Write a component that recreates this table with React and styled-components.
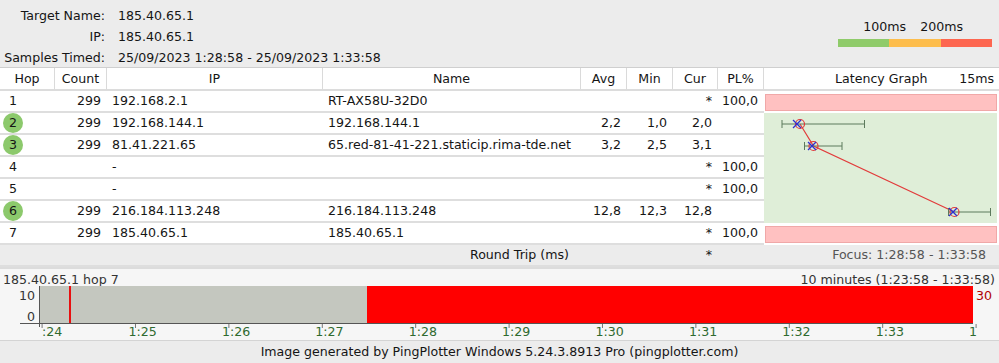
import React from 'react'
import styled, { createGlobalStyle } from 'styled-components'

const GlobalStyle = createGlobalStyle`
  body {
    margin: 0;
    background: #ffffff;
    font-family: "DejaVu Sans", Verdana, sans-serif;
    font-size: 12.6px;
    color: #151515;
  }
`

const Page = styled.div`
  width: 999px;
  height: 363px;
  overflow: hidden;
  display: flex;
  flex-direction: column;
`

const Header = styled.div`
  height: 67px;
  background: #ececec;
  display: flex;
  justify-content: space-between;
  box-sizing: border-box;
  padding: 8px 7px 0 4px;
`

const InfoGrid = styled.div`
  display: grid;
  grid-template-columns: 101px auto;
  column-gap: 13px;
  row-gap: 6px;
  align-content: start;
  white-space: nowrap;
`

const InfoLabel = styled.div`
  text-align: right;
  line-height: 15px;
`

const InfoValue = styled.div`
  line-height: 15px;
`

const Legend = styled.div`
  display: flex;
  flex-direction: column;
  align-items: flex-end;
  padding-top: 12px;
`

const LegendText = styled.div`
  display: flex;
  gap: 14px;
  padding-right: 29px;
  line-height: 14px;
`

const LegendBar = styled.div`
  display: flex;
  margin-top: 5px;
`

const LegendSeg = styled.div`
  width: 51.5px;
  height: 8px;
  background: ${p => p.$color};
`

const Table = styled.div`
  display: grid;
  grid-template-columns: 55px 52px 216px 258px 46px 46px 45px 46px 235px;
  grid-template-rows: 23px repeat(7, 22px) 22px;
  border-top: 1px solid #cfcfcf;
`

const HeadCell = styled.div`
  line-height: 22px;
  text-align: center;
  border-right: ${p => (p.$last ? 'none' : '1px solid #dadada')};
  border-bottom: 2px solid #dcdcdc;
  box-sizing: border-box;
  display: flex;
  justify-content: ${p => (p.$split ? 'space-between' : 'center')};
  padding: ${p => (p.$split ? '0 5px 0 71px' : '0')};
`

const Cell = styled.div`
  line-height: 20px;
  border-bottom: 2px solid #dedede;
  white-space: nowrap;
  overflow: hidden;
  text-align: ${p => (p.$right ? 'right' : 'left')};
  padding: ${p => (p.$right ? '0 6px 0 0' : '0 0 0 5px')};
  background: ${p => (p.$gray ? '#ececec' : '#ffffff')};
  color: ${p => (p.$muted ? '#555' : 'inherit')};
`

const HopCell = styled(Cell)`
  position: relative;
  padding-left: 9px;
`

const HopBadge = styled.span`
  position: absolute;
  left: 3px;
  top: 0px;
  width: 20px;
  height: 20px;
  border-radius: 50%;
  background: #8cc96c;
`

const HopNum = styled.span`
  position: relative;
`

const GraphWrap = styled.div`
  grid-column: 9;
  grid-row: 2 / span 7;
  background: #ffffff;
`

const RoundTripCell = styled(Cell)`
  padding-right: 12px;
`

const FocusCell = styled(Cell)`
  padding-right: 13px;
`

const ChartSection = styled.div`
  border-top: 2px solid #dcdcdc;
  background: #f6f6f6;
  height: 71px;
  display: flex;
  flex-direction: column;
`

const ChartHead = styled.div`
  display: flex;
  justify-content: space-between;
  padding: 0 4px 0 3px;
  line-height: 22px;
  height: 17px;
  color: #333;
`

const Footer = styled.div`
  flex: 1;
  background: #ececec;
  border-top: 1px solid #d4d4d4;
  text-align: center;
  line-height: 22px;
`

const hops = [
  { hop: 1, count: 299, ip: '192.168.2.1', name: 'RT-AX58U-32D0', avg: '', min: '', cur: '*', pl: '100,0' },
  { hop: 2, count: 299, ip: '192.168.144.1', name: '192.168.144.1', avg: '2,2', min: '1,0', cur: '2,0', pl: '', ok: true },
  { hop: 3, count: 299, ip: '81.41.221.65', name: '65.red-81-41-221.staticip.rima-tde.net', avg: '3,2', min: '2,5', cur: '3,1', pl: '', ok: true },
  { hop: 4, count: '', ip: '-', name: '', avg: '', min: '', cur: '*', pl: '100,0' },
  { hop: 5, count: '', ip: '-', name: '', avg: '', min: '', cur: '*', pl: '100,0' },
  { hop: 6, count: 299, ip: '216.184.113.248', name: '216.184.113.248', avg: '12,8', min: '12,3', cur: '12,8', pl: '', ok: true },
  { hop: 7, count: 299, ip: '185.40.65.1', name: '185.40.65.1', avg: '', min: '', cur: '*', pl: '100,0' },
]

// latency points in graph coords: x = ms * 15, rows 22px tall
const points = [
  { row: 1, avg: 2.2, cur: 2.4, lo: 1.2, hi: 6.7 },
  { row: 2, avg: 3.2, cur: 3.3, lo: 2.7, hi: 5.2 },
  { row: 5, avg: 12.6, cur: 12.7, lo: 12.3, hi: 15.1 },
]

const LatencyGraph = () => {
  const sx = ms => ms * 15
  const cy = row => row * 22 + 11
  return (
    <svg width="235" height="154" viewBox="0 0 235 154">
      <rect x="0" y="22" width="233" height="110" fill="#dfeed8" />
      <rect x="1.5" y="3.5" width="231" height="16" fill="#ffc1c1" stroke="#f0a8a8" />
      <rect x="1.5" y="135.5" width="231" height="16" fill="#ffc1c1" stroke="#f0a8a8" />
      <polyline
        points={points.map(p => `${sx(p.cur)},${cy(p.row)}`).join(' ')}
        fill="none"
        stroke="#e23b3b"
        strokeWidth="1.2"
      />
      {points.map(p => {
        const y = cy(p.row)
        return (
          <g key={p.row}>
            <line x1={sx(p.lo)} y1={y} x2={sx(p.hi)} y2={y} stroke="#5d7a5d" strokeWidth="1" />
            <line x1={sx(p.lo)} y1={y - 4} x2={sx(p.lo)} y2={y + 4} stroke="#5d7a5d" />
            <line x1={sx(p.hi)} y1={y - 4} x2={sx(p.hi)} y2={y + 4} stroke="#5d7a5d" />
            <circle cx={sx(p.cur)} cy={y} r="4.5" fill="none" stroke="#e23b3b" strokeWidth="1.2" />
            <line x1={sx(p.avg) - 4} y1={y - 4} x2={sx(p.avg) + 4} y2={y + 4} stroke="#3030d0" strokeWidth="1.2" />
            <line x1={sx(p.avg) - 4} y1={y + 4} x2={sx(p.avg) + 4} y2={y - 4} stroke="#3030d0" strokeWidth="1.2" />
          </g>
        )
      })}
    </svg>
  )
}

const timeLabels = ['1:24', '1:25', '1:26', '1:27', '1:28', '1:29', '1:30', '1:31', '1:32', '1:33', '1']

const TimeChart = () => {
  const x0 = 39
  const perMin = 93.4
  return (
    <svg width="999" height="54" viewBox="0 0 999 54" style={{ display: 'block' }}>
      <rect x="39" y="0" width="328" height="37" fill="#c4c7bf" />
      <rect x="367" y="0" width="606" height="37" fill="#ff0000" />
      <rect x="69" y="0" width="2" height="37" fill="#e81010" />
      <line x1="39.5" y1="0" x2="39.5" y2="41" stroke="#555" />
      <line x1="20" y1="37.5" x2="973" y2="37.5" stroke="#555" />
      <text x="35" y="14" textAnchor="end" fontFamily="DejaVu Sans" fontSize="12.6" fill="#333">10</text>
      <text x="35" y="35" textAnchor="end" fontFamily="DejaVu Sans" fontSize="12.6" fill="#333">0</text>
      <text x="976" y="14" fontFamily="DejaVu Sans" fontSize="12.6" fill="#b00000">30</text>
      {timeLabels.map((t, i) => {
        const tx = x0 + (i + 0.033) * perMin
        const label = i === 0 ? ':24' : t
        const lx = i === 0 ? tx : tx - 7
        return (
          <g key={t + i}>
            <line x1={tx} y1="38" x2={tx} y2="42" stroke="#777" />
            <text x={lx} y="50" fontFamily="DejaVu Sans" fontSize="12.6" fill="#2f6a2f">{label}</text>
          </g>
        )
      })}
    </svg>
  )
}

export default function App() {
  return (
    <>
      <GlobalStyle />
      <Page>
        <Header>
          <InfoGrid>
            <InfoLabel>Target Name:</InfoLabel>
            <InfoValue>185.40.65.1</InfoValue>
            <InfoLabel>IP:</InfoLabel>
            <InfoValue>185.40.65.1</InfoValue>
            <InfoLabel>Samples Timed:</InfoLabel>
            <InfoValue>25/09/2023 1:28:58 - 25/09/2023 1:33:58</InfoValue>
          </InfoGrid>
          <Legend>
            <LegendText>
              <span>100ms</span>
              <span>200ms</span>
            </LegendText>
            <LegendBar>
              <LegendSeg $color="#8fcb6a" />
              <LegendSeg $color="#fdbd4c" />
              <LegendSeg $color="#fd6650" />
            </LegendBar>
          </Legend>
        </Header>

        <Table>
          <HeadCell>Hop</HeadCell>
          <HeadCell>Count</HeadCell>
          <HeadCell>IP</HeadCell>
          <HeadCell>Name</HeadCell>
          <HeadCell>Avg</HeadCell>
          <HeadCell>Min</HeadCell>
          <HeadCell>Cur</HeadCell>
          <HeadCell>PL%</HeadCell>
          <HeadCell $last $split>
            <span>Latency Graph</span>
            <span>15ms</span>
          </HeadCell>

          {hops.map(h => (
            <React.Fragment key={h.hop}>
              <HopCell>
                {h.ok && <HopBadge />}
                <HopNum>{h.hop}</HopNum>
              </HopCell>
              <Cell $right>{h.count}</Cell>
              <Cell>{h.ip}</Cell>
              <Cell>{h.name}</Cell>
              <Cell $right>{h.avg}</Cell>
              <Cell $right>{h.min}</Cell>
              <Cell $right>{h.cur}</Cell>
              <Cell $right>{h.pl}</Cell>
            </React.Fragment>
          ))}

          <GraphWrap>
            <LatencyGraph />
          </GraphWrap>

          <Cell $gray />
          <Cell $gray />
          <Cell $gray />
          <RoundTripCell $gray $right>Round Trip (ms)</RoundTripCell>
          <Cell $gray />
          <Cell $gray />
          <Cell $gray $right>*</Cell>
          <Cell $gray />
          <FocusCell $gray $right $muted>Focus: 1:28:58 - 1:33:58</FocusCell>
        </Table>

        <ChartSection>
          <ChartHead>
            <span>185.40.65.1 hop 7</span>
            <span>10 minutes (1:23:58 - 1:33:58)</span>
          </ChartHead>
          <TimeChart />
        </ChartSection>

        <Footer>Image generated by PingPlotter Windows 5.24.3.8913 Pro (pingplotter.com)</Footer>
      </Page>
    </>
  )
}
